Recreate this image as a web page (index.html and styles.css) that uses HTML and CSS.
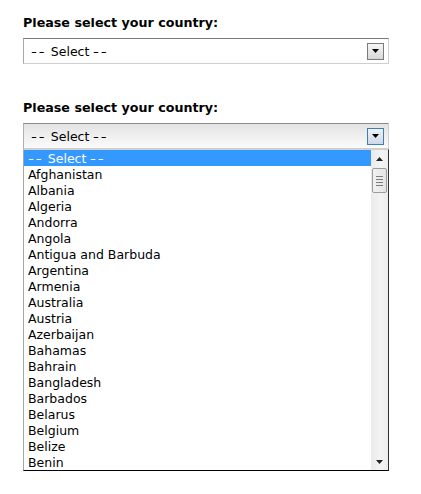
FILE: index.html
```html
<!DOCTYPE html>
<html>
<head>
<meta charset="utf-8">
<link rel="stylesheet" href="styles.css">
</head>
<body>
<div class="page">
  <div class="field">
    <label class="label">Please select your country:</label>
    <div class="select">
      <span class="value"><span class="dash lead">--</span> Select <span class="dash">--</span></span>
      <span class="btn"><svg width="7" height="4" viewBox="0 0 7 4"><path d="M0 0H7L3.5 4Z" fill="#000"/></svg></span>
    </div>
  </div>
  <div class="field second">
    <label class="label">Please select your country:</label>
    <div class="select focus">
      <span class="value"><span class="dash lead">--</span> Select <span class="dash">--</span></span>
      <span class="btn"><svg width="7" height="4" viewBox="0 0 7 4"><path d="M0 0H7L3.5 4Z" fill="#000"/></svg></span>
    </div>
    <div class="list">
      <ul class="options">
        <li class="sel"><span class="dash lead">--</span> Select <span class="dash">--</span></li>
        <li>Afghanistan</li>
        <li>Albania</li>
        <li>Algeria</li>
        <li>Andorra</li>
        <li>Angola</li>
        <li>Antigua and Barbuda</li>
        <li>Argentina</li>
        <li>Armenia</li>
        <li>Australia</li>
        <li>Austria</li>
        <li>Azerbaijan</li>
        <li>Bahamas</li>
        <li>Bahrain</li>
        <li>Bangladesh</li>
        <li>Barbados</li>
        <li>Belarus</li>
        <li>Belgium</li>
        <li>Belize</li>
        <li>Benin</li>
      </ul>
      <div class="scrollbar">
        <div class="arrow up"><svg width="7" height="4" viewBox="0 0 7 4"><path d="M3.5 0L7 4H0Z" fill="#222"/></svg></div>
        <div class="thumb"><span></span><span></span><span></span><span></span></div>
        <div class="track"></div>
        <div class="arrow down"><svg width="7" height="4" viewBox="0 0 7 4"><path d="M0 0H7L3.5 4Z" fill="#222"/></svg></div>
      </div>
    </div>
  </div>
</div>
</body>
</html>
```
FILE: styles.css
```css
html, body {
  margin: 0;
  padding: 0;
  background: #fff;
}
.page {
  padding: 15px 0 0 23px;
  width: 366px;
  font-family: "DejaVu Sans", Verdana, sans-serif;
  color: #000;
}
.field {
  display: flex;
  flex-direction: column;
}
.field.second {
  margin-top: 36px;
}
.label {
  font-weight: bold;
  font-size: 12.7px;
  line-height: 16px;
  height: 16px;
  margin-bottom: 7px;
}
.select {
  box-sizing: border-box;
  height: 26px;
  width: 366px;
  border: 1px solid #cfcfcf;
  border-top-color: #7a7a7a;
  border-left-color: #a8a8a8;
  background: #fff;
  display: flex;
  align-items: center;
  justify-content: space-between;
  padding: 0 4px 0 7px;
}
.select.focus {
  background: linear-gradient(#e3e3e3, #fbfbfb);
  border-top-color: #8a8a8a;
  border-left-color: #b0b0b0;
}
.value {
  font-size: 12.5px;
  line-height: 16px;
  padding-top: 2px;
  white-space: nowrap;
}
.dash {
  display: inline-block;
  letter-spacing: 1.4px;
  transform: scaleX(1.3);
  transform-origin: left center;
}
.dash.lead {
  margin-right: 4px;
}
.btn {
  box-sizing: border-box;
  width: 17px;
  height: 17px;
  border: 1px solid #7b7b7b;
  background: linear-gradient(#f6f6f6, #d8d8d8);
  display: flex;
  align-items: center;
  justify-content: center;
}
.focus .btn {
  border-color: #3d7fb3;
  background: linear-gradient(#eef3f8, #cdd9e6);
}
.list {
  box-sizing: border-box;
  width: 366px;
  height: 322px;
  border: 1px solid #a6a6a6;
  border-top-color: #d0d0d0;
  border-right-color: #303030;
  border-bottom-color: #000;
  display: flex;
  background: #fff;
}
.options {
  list-style: none;
  margin: 0;
  padding: 0;
  flex: 1;
}
.options li {
  box-sizing: border-box;
  height: 16px;
  line-height: 16px;
  padding-top: 1px;
  font-size: 12.5px;
  padding-left: 4px;
  white-space: nowrap;
}
.options li.sel {
  background: #3399ff;
  color: #fff;
}
.scrollbar {
  width: 17px;
  display: flex;
  flex-direction: column;
  align-items: center;
  background: linear-gradient(90deg, #eaeaea, #f4f4f4 60%, #ececec);
}
.arrow {
  height: 17px;
  width: 17px;
  display: flex;
  align-items: center;
  justify-content: center;
}
.thumb {
  box-sizing: border-box;
  width: 15px;
  height: 25px;
  margin-top: 1px;
  border: 1px solid #9c9c9c;
  border-radius: 2px;
  background: linear-gradient(90deg, #f2f2f2, #e4e4e4);
  display: flex;
  flex-direction: column;
  align-items: center;
  justify-content: center;
  gap: 2px;
}
.thumb span {
  width: 7px;
  height: 1px;
  background: #7d7d7d;
}
.track {
  flex: 1;
}
```
